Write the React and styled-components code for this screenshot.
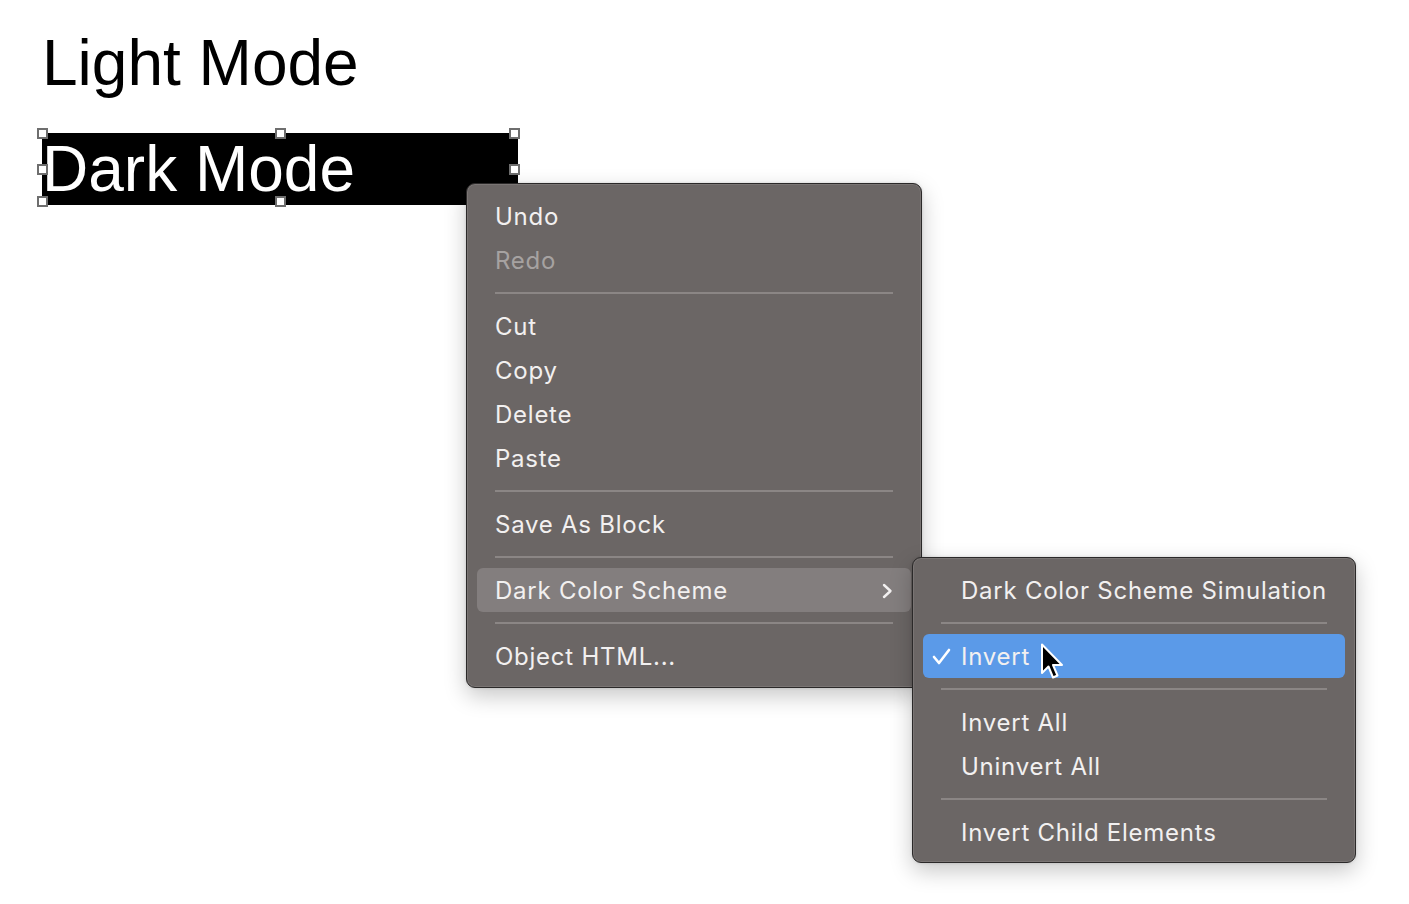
import React from "react";
import styled, { createGlobalStyle } from "styled-components";

const GlobalStyle = createGlobalStyle`
  html, body {
    margin: 0;
    padding: 0;
    background: #ffffff;
  }
  body {
    font-family: "Liberation Sans", Arial, sans-serif;
  }
`;

const Page = styled.div`
  position: relative;
  width: 1409px;
  height: 904px;
  overflow: hidden;
  padding: 27px 0 0 42px;
  box-sizing: border-box;
  display: flex;
  flex-direction: column;
  align-items: flex-start;
  gap: 34px;
`;

const Title = styled.div`
  font-family: "Liberation Sans", Arial, sans-serif;
  font-size: 64px;
  line-height: 72px;
  height: 72px;
  color: ${(p) => (p.$dark ? "#ffffff" : "#000000")};
  background: ${(p) => (p.$dark ? "#000000" : "transparent")};
  width: ${(p) => (p.$dark ? "476px" : "auto")};
  position: relative;
  white-space: nowrap;
`;

const Handle = styled.span`
  position: absolute;
  width: 7px;
  height: 7px;
  background: #ffffff;
  border: 2px solid #6e6e6e;
  left: ${(p) => p.$x - 5}px;
  top: ${(p) => p.$y - 5}px;
`;

const Menu = styled.div`
  position: absolute;
  left: ${(p) => p.$left}px;
  top: ${(p) => p.$top}px;
  width: ${(p) => p.$width}px;
  box-sizing: border-box;
  padding: ${(p) => p.$pad};
  background: #6b6665;
  border: 1px solid #2b2929;
  border-radius: 9px;
  box-shadow: inset 0 0 0 1px rgba(255, 255, 255, 0.1),
    0 8px 22px rgba(0, 0, 0, 0.22), 0 0 3px rgba(0, 0, 0, 0.15);
  display: flex;
  flex-direction: column;
  font-family: Inter, "Noto Sans", sans-serif;
  font-size: 24px;
  letter-spacing: 0.75px;
  color: #f2f0f0;
`;

const Item = styled.div`
  position: relative;
  height: 44px;
  margin: 0 10px;
  padding-left: ${(p) => p.$indent}px;
  border-radius: 6px;
  display: flex;
  align-items: center;
  background: ${(p) =>
    p.$active === "blue" ? "#5b9ae8" : p.$active ? "#837e7e" : "transparent"};
  color: ${(p) => (p.$disabled ? "#a6a2a1" : "#f2f0f0")};
`;

const Separator = styled.div`
  height: 22px;
  margin: 0 28px;
  display: flex;
  align-items: center;
  &::after {
    content: "";
    flex: 1;
    height: 2px;
    background: #8b8685;
  }
`;

const Chevron = styled.svg`
  position: absolute;
  right: 18px;
  top: 15px;
`;

const Check = styled.svg`
  position: absolute;
  left: 9px;
  top: 14px;
`;

const Cursor = styled.svg`
  position: absolute;
  left: 1040px;
  top: 643px;
`;

const handles = [
  [0, 0],
  [238, 0],
  [472, 0],
  [0, 36],
  [472, 36],
  [0, 68],
  [238, 68],
  [472, 68],
];

export default function App() {
  return (
    <Page>
      <GlobalStyle />
      <Title>Light Mode</Title>
      <Title $dark>
        Dark Mode
        {handles.map(([x, y], i) => (
          <Handle key={i} $x={x} $y={y} />
        ))}
      </Title>

      <Menu $left={466} $top={183} $width={456} $pad="10px 0 9px">
        <Item $indent={18}>Undo</Item>
        <Item $indent={18} $disabled>
          Redo
        </Item>
        <Separator />
        <Item $indent={18}>Cut</Item>
        <Item $indent={18}>Copy</Item>
        <Item $indent={18}>Delete</Item>
        <Item $indent={18}>Paste</Item>
        <Separator />
        <Item $indent={18}>Save As Block</Item>
        <Separator />
        <Item $indent={18} $active>
          Dark Color Scheme
          <Chevron width="12" height="16" viewBox="0 0 12 16">
            <polyline
              points="3,2 9.5,8 3,14"
              fill="none"
              stroke="#f2f0f0"
              strokeWidth="2.4"
              strokeLinecap="round"
              strokeLinejoin="round"
            />
          </Chevron>
        </Item>
        <Separator />
        <Item $indent={18}>Object HTML...</Item>
      </Menu>

      <Menu $left={912} $top={557} $width={444} $pad="10px 0 8px">
        <Item $indent={38}>Dark Color Scheme Simulation</Item>
        <Separator />
        <Item $indent={38} $active="blue">
          <Check width="19" height="17" viewBox="0 0 19 17">
            <polyline
              points="2,9 7,15 17,2"
              fill="none"
              stroke="#ffffff"
              strokeWidth="2.6"
              strokeLinecap="round"
              strokeLinejoin="round"
            />
          </Check>
          Invert
        </Item>
        <Separator />
        <Item $indent={38}>Invert All</Item>
        <Item $indent={38}>Uninvert All</Item>
        <Separator />
        <Item $indent={38}>Invert Child Elements</Item>
      </Menu>

      <Cursor width="24" height="38" viewBox="0 0 24 38">
        <path
          d="M2 1.5 L2 30 L8.5 23.5 L13 34.5 L17.5 32.5 L13 22 L22 22 Z"
          fill="#000000"
          stroke="#ffffff"
          strokeWidth="2"
          strokeLinejoin="round"
        />
      </Cursor>
    </Page>
  );
}
